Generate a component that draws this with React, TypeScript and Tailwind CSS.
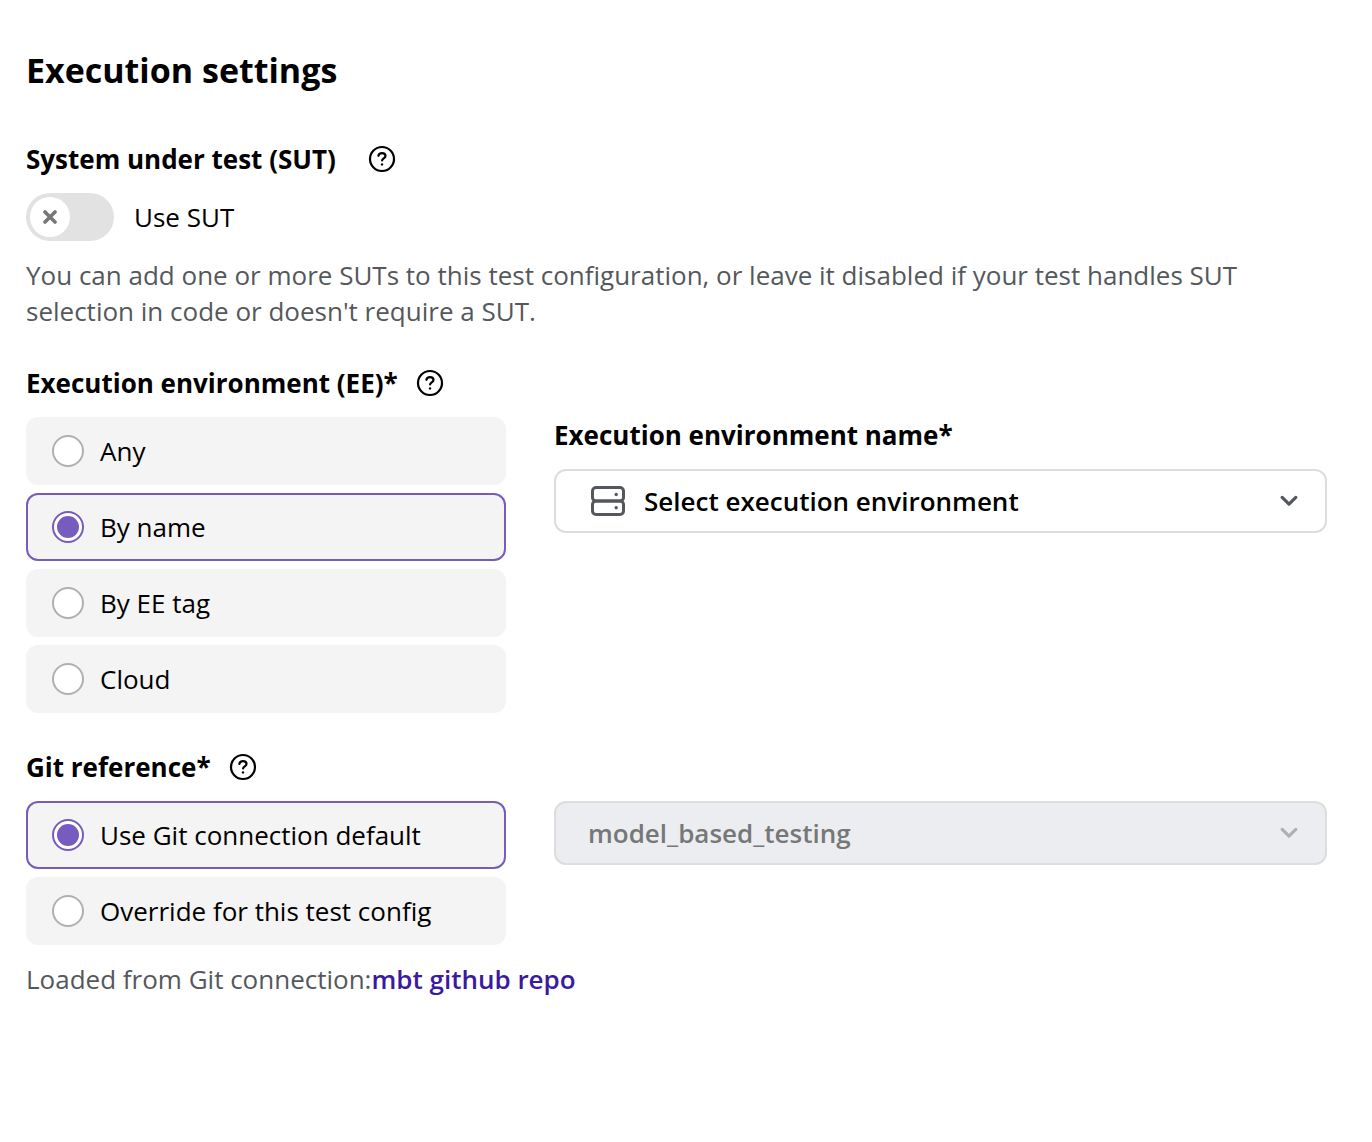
import { useState } from "react";
import type { ReactNode } from "react";

const environmentOptions = [
  { value: "any", label: "Any" },
  { value: "name", label: "By name" },
  { value: "tag", label: "By EE tag" },
  { value: "cloud", label: "Cloud" },
] as const;

const gitOptions = [
  { value: "default", label: "Use Git connection default" },
  { value: "override", label: "Override for this test config" },
] as const;

function HelpIcon() {
  return (
    <svg width="28" height="28" viewBox="0 0 28 28" fill="none" aria-hidden>
      <circle cx="14" cy="14" r="12" stroke="currentColor" strokeWidth="2.2" />
      <path
        d="M10.4 10.8C10.7 9.2 12 8.1 14 8.1C16 8.1 17.5 9.3 17.5 11C17.5 13.2 14.1 13.5 14.1 15.4"
        stroke="currentColor"
        strokeWidth="2.2"
        strokeLinecap="round"
      />
      <circle cx="14" cy="19.4" r="1.2" fill="currentColor" />
    </svg>
  );
}

function ServerIcon({ className }: { className?: string }) {
  return (
    <svg width="34" height="30" viewBox="0 0 34 30" fill="none" aria-hidden className={className}>
      <rect x="1.5" y="1.5" width="31" height="13.5" rx="3.5" stroke="#54585c" strokeWidth="3" />
      <rect x="1.5" y="15" width="31" height="13.5" rx="3.5" stroke="#54585c" strokeWidth="3" />
      <circle cx="25.2" cy="8.5" r="1.7" fill="#54585c" />
      <circle cx="25.2" cy="21.7" r="1.7" fill="#54585c" />
    </svg>
  );
}

function ChevronIcon({ className }: { className?: string }) {
  return (
    <svg width="18" height="12" viewBox="0 0 18 12" fill="none" aria-hidden className={className}>
      <path
        d="M2.2 2.4L9 9.1L15.8 2.4"
        stroke="currentColor"
        strokeWidth="3.2"
        strokeLinecap="round"
        strokeLinejoin="round"
      />
    </svg>
  );
}

function SectionTitle({ children, className = "gap-4" }: { children: string; className?: string }) {
  return (
    <div className={`flex items-center ${className}`}>
      <h2 className="font-bold">{children}</h2>
      <button type="button" aria-label={`Help: ${children}`} className="mx-0.5 cursor-pointer">
        <HelpIcon />
      </button>
    </div>
  );
}

function RadioCards({
  name,
  legend,
  options,
  value,
  onChange,
}: {
  name: string;
  legend: string;
  options: readonly { value: string; label: string }[];
  value: string;
  onChange: (value: string) => void;
}) {
  return (
    <div role="radiogroup" aria-label={legend} className="flex w-full flex-col gap-2 md:w-[480px]">
      {options.map((option) => (
        <label
          key={option.value}
          className="flex cursor-pointer items-center gap-4 rounded-xl border-2 border-[#f4f4f4] bg-[#f4f4f4] px-6 py-3.5 has-checked:border-[#775bbf]"
        >
          <input
            type="radio"
            name={name}
            value={option.value}
            checked={value === option.value}
            onChange={() => onChange(option.value)}
            className="grid size-8 shrink-0 appearance-none place-items-center rounded-full border-2 border-[#b0b0b0] bg-white before:size-[22px] before:rounded-full checked:border-[#775bbf] checked:before:bg-[#775bbf]"
          />
          {option.label}
        </label>
      ))}
    </div>
  );
}

function SelectBox({
  id,
  label,
  disabled,
  icon,
  children,
}: {
  id: string;
  label?: string;
  disabled?: boolean;
  icon?: ReactNode;
  children: ReactNode;
}) {
  return (
    <div className="relative">
      <select
        id={id}
        aria-label={label}
        disabled={disabled}
        className={`h-16 w-full appearance-none rounded-xl border-2 border-[#dcdddd] pr-16 font-semibold disabled:bg-[#ebedf1] disabled:text-[#777777] disabled:opacity-100 ${icon ? "pl-[88px]" : "pl-8"}`}
      >
        {children}
      </select>
      {icon}
      <ChevronIcon
        className={`pointer-events-none absolute top-1/2 right-[29px] -translate-y-1/2 ${disabled ? "text-[#aeb0b2]" : "text-[#54585c]"}`}
      />
    </div>
  );
}

export default function App() {
  const [useSut, setUseSut] = useState(false);
  const [environment, setEnvironment] = useState("name");
  const [gitRef, setGitRef] = useState("default");

  return (
    <main className="min-h-screen bg-white pt-[47px] pr-[45px] pb-12 pl-[26px] font-['Open_Sans',sans-serif] text-[26px] leading-9 text-black">
      <h1 className="text-[34px] leading-[46px] font-bold">Execution settings</h1>

      <section className="mt-12">
        <SectionTitle className="gap-[30px]">System under test (SUT)</SectionTitle>
        <label className="mt-4 flex w-fit cursor-pointer items-center gap-5">
          <input
            type="checkbox"
            role="switch"
            checked={useSut}
            onChange={(e) => setUseSut(e.target.checked)}
            className="peer sr-only"
          />
          <span className="flex h-12 w-[88px] items-center rounded-full bg-[#e2e2e2] p-1 peer-checked:justify-end peer-checked:bg-[#775bbf]">
            <span className="grid size-10 place-items-center rounded-full bg-white">
              <svg width="14" height="14" viewBox="0 0 14 14" fill="none" aria-hidden>
                <path
                  d={useSut ? "M2 7.5L5.5 11L12 3.5" : "M2 2L12 12M12 2L2 12"}
                  stroke="#777777"
                  strokeWidth="3.6"
                  strokeLinecap="round"
                />
              </svg>
            </span>
          </span>
          Use SUT
        </label>
        <p className="mt-4 text-[#54585c]">
          You can add one or more SUTs to this test configuration, or leave it disabled if your test
          handles SUT selection in code or doesn't require a SUT.
        </p>
      </section>

      <section className="mt-9">
        <SectionTitle>Execution environment (EE)*</SectionTitle>
        <div className="mt-4 flex flex-col gap-6 md:flex-row md:gap-12">
          <RadioCards
            name="environment"
            legend="Execution environment"
            options={environmentOptions}
            value={environment}
            onChange={setEnvironment}
          />
          {environment === "name" && (
            <div className="flex min-w-0 flex-1 flex-col gap-4">
              <label htmlFor="environment-name" className="font-bold">
                Execution environment name*
              </label>
              <SelectBox
                id="environment-name"
                icon={
                  <ServerIcon className="pointer-events-none absolute top-1/2 left-[37px] -translate-y-1/2" />
                }
              >
                <option>Select execution environment</option>
              </SelectBox>
            </div>
          )}
        </div>
      </section>

      <section className="mt-9">
        <SectionTitle>Git reference*</SectionTitle>
        <div className="mt-4 flex flex-col gap-6 md:flex-row md:gap-12">
          <RadioCards
            name="git-reference"
            legend="Git reference"
            options={gitOptions}
            value={gitRef}
            onChange={setGitRef}
          />
          <div className="min-w-0 flex-1">
            <SelectBox id="git-branch" label="Git branch" disabled={gitRef === "default"}>
              <option>model_based_testing</option>
            </SelectBox>
          </div>
        </div>
        <p className="mt-4 text-[#54585c]">
          Loaded from Git connection:
          <a href="#git-connection" className="font-semibold text-[#3a1a9e]">
            mbt github repo
          </a>
        </p>
      </section>
    </main>
  );
}
